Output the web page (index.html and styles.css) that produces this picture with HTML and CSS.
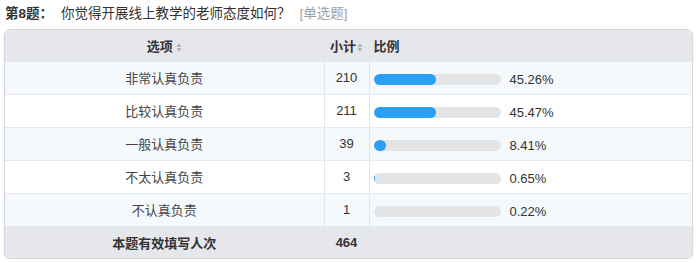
FILE: index.html
```html
<!DOCTYPE html>
<html lang="zh-CN">
<head>
<meta charset="utf-8">
<title>第8题</title>
<link rel="stylesheet" href="styles.css">
</head>
<body>
<div class="page">
  <div class="title">
    <span class="qno">第8题：</span>
    <span class="qtext">你觉得开展线上教学的老师态度如何？</span>
    <span class="qtype">[单选题]</span>
  </div>
  <div class="card">
    <table class="stats">
      <colgroup>
        <col class="c-opt">
        <col class="c-cnt">
        <col class="c-pct">
      </colgroup>
      <thead>
        <tr>
          <th class="th-opt">选项<svg class="sort" width="6" height="9" viewBox="0 0 6 9"><path d="M3 0.5L5.5 3.8H0.5Z M3 8.5L0.5 5.2H5.5Z" fill="#a7a9ad"/></svg></th>
          <th class="th-cnt">小计<svg class="sort" width="6" height="9" viewBox="0 0 6 9"><path d="M3 0.5L5.5 3.8H0.5Z M3 8.5L0.5 5.2H5.5Z" fill="#a7a9ad"/></svg></th>
          <th class="th-pct">比例</th>
        </tr>
      </thead>
      <tbody>
        <tr class="alt">
          <td class="opt">非常认真负责</td>
          <td class="cnt">210</td>
          <td class="pct"><div class="bar-wrap"><div class="track"><div class="fill" style="width:62px"></div></div><span class="val">45.26%</span></div></td>
        </tr>
        <tr>
          <td class="opt">比较认真负责</td>
          <td class="cnt">211</td>
          <td class="pct"><div class="bar-wrap"><div class="track"><div class="fill" style="width:62px"></div></div><span class="val">45.47%</span></div></td>
        </tr>
        <tr class="alt">
          <td class="opt">一般认真负责</td>
          <td class="cnt">39</td>
          <td class="pct"><div class="bar-wrap"><div class="track"><div class="fill" style="width:12px"></div></div><span class="val">8.41%</span></div></td>
        </tr>
        <tr>
          <td class="opt">不太认真负责</td>
          <td class="cnt">3</td>
          <td class="pct"><div class="bar-wrap"><div class="track"><div class="fill thin" style="width:1px"></div></div><span class="val">0.65%</span></div></td>
        </tr>
        <tr class="alt">
          <td class="opt">不认真负责</td>
          <td class="cnt">1</td>
          <td class="pct"><div class="bar-wrap"><div class="track"><div class="fill" style="width:0px"></div></div><span class="val">0.22%</span></div></td>
        </tr>
      </tbody>
      <tfoot>
        <tr>
          <td class="opt total">本题有效填写人次</td>
          <td class="cnt total">464</td>
          <td class="pct"></td>
        </tr>
      </tfoot>
    </table>
  </div>
</div>
</body>
</html>
```

FILE: styles.css
```css
html, body {
  margin: 0;
  padding: 0;
  background: #ffffff;
}

.page {
  padding: 4px 4px 0 4px;
  font-family: "Liberation Sans", "Noto Sans CJK SC", sans-serif;
  color: #333333;
  font-size: 13px;
}

.title {
  display: flex;
  align-items: center;
  height: 20px;
  padding-left: 1px;
  margin-bottom: 5px;
  font-size: 13.5px;
  line-height: 20px;
}

.qno {
  font-weight: bold;
  color: #333333;
}

.qtext {
  margin-left: 8px;
  color: #333333;
}

.qtype {
  margin-left: 9px;
  color: #a0a0a0;
}

.card {
  width: 689px;
  border: 1px solid #d5d7da;
  border-radius: 6px;
  overflow: hidden;
  box-shadow: 0 1px 2px rgba(0, 0, 0, 0.08);
  box-sizing: border-box;
}

.stats {
  width: 100%;
  border-collapse: collapse;
  table-layout: fixed;
}

.c-opt { width: 319px; }
.c-cnt { width: 45px; }
.c-pct { width: auto; }

.stats th,
.stats td {
  height: 32px;
  padding: 0 4px;
  font-size: 13px;
  border-right: 1px solid #e3e5e8;
  border-bottom: 1px solid #e6e9ee;
  box-sizing: border-box;
}

.stats th:last-child,
.stats td:last-child {
  border-right: none;
}

.stats thead th {
  background: #e5e7ea;
  font-weight: bold;
  color: #333333;
  height: 31px;
}

.th-opt, .th-cnt { text-align: center; }
.th-pct { text-align: left; }

.sort {
  margin-left: 3px;
  vertical-align: -1px;
}

.th-cnt .sort { margin-left: 1px; }

.stats tbody tr { background: #ffffff; }
.stats tbody tr.alt { background: #f5f9fc; }

.opt {
  text-align: center;
  color: #444444;
}

.cnt {
  text-align: center;
  color: #333333;
}

.stats tbody td { height: 33px; }

.bar-wrap {
  display: flex;
  align-items: center;
  padding-top: 3px;
}

.track {
  width: 127px;
  height: 11px;
  border-radius: 6px;
  background: #e3e4e6;
  overflow: hidden;
}

.fill {
  height: 100%;
  background: #2b9ef5;
  border-radius: 6px;
}

.fill.thin { border-radius: 0; }

.val {
  margin-left: 9px;
  color: #333333;
  font-size: 13px;
}

.stats tfoot td {
  background: #e5e7ea;
  border-bottom: none;
  height: 32px;
}

.total {
  font-weight: bold;
  color: #333333;
}
```
